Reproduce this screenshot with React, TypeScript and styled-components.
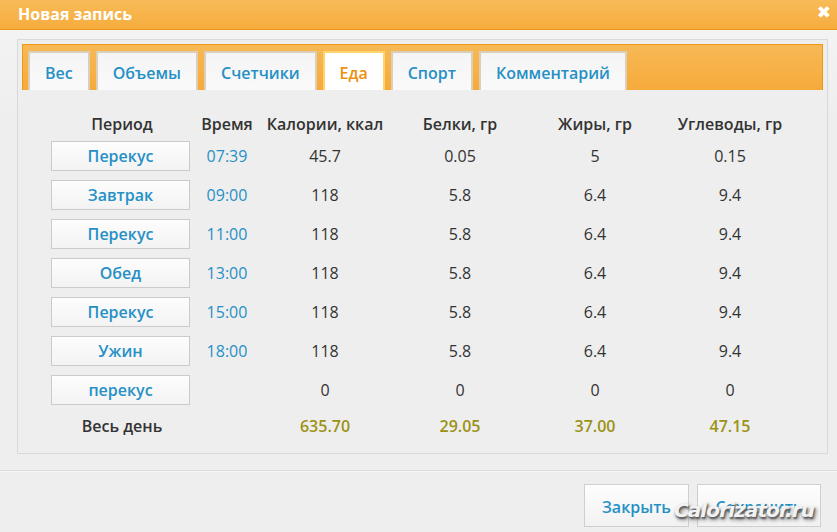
import styled, { createGlobalStyle } from 'styled-components'

const GlobalStyle = createGlobalStyle`
  html, body {
    margin: 0;
    padding: 0;
    background: #f0f0f0;
    font-family: 'Open Sans', 'DejaVu Sans', sans-serif;
  }
`

const Dialog = styled.div`
  position: relative;
  width: 837px;
  height: 532px;
  overflow: hidden;
  background: linear-gradient(#f5f5f5, #eeeeee 120px, #eeeeee);
`

const TitleBar = styled.div`
  height: 30px;
  box-sizing: border-box;
  display: flex;
  align-items: center;
  justify-content: space-between;
  padding: 0 6px 1px 18px;
  background: linear-gradient(#f8bb58, #f6ac3e);
  border-bottom: 1px solid #ef9511;
  color: #fff;
  font-weight: 700;
  font-size: 16px;
`

const Close = styled.span`
  font-size: 17px;
  line-height: 1;
  margin-top: -4px;
  font-family: 'DejaVu Sans', sans-serif;
`

const Panel = styled.div`
  margin: 9px 9px 0 17px;
  border: 1px solid #d9d9d9;
  padding: 4px 4px 15px;
  background: #eeeeee;
`

const TabBar = styled.div`
  display: flex;
  gap: 6px;
  height: 46px;
  box-sizing: border-box;
  padding: 6px 0 0 5px;
  border: 1px solid #ef9913;
  border-bottom: none;
  background: linear-gradient(#f7b956, #f6aa3a);
`

const Tab = styled.div<{ $active?: boolean }>`
  display: flex;
  align-items: center;
  padding: 2px 15px 0;
  box-sizing: border-box;
  height: 39px;
  border: 2px solid ${p => (p.$active ? '#fcd46a' : '#dccfb9')};
  border-bottom: none;
  background: ${p => (p.$active ? '#ffffff' : 'linear-gradient(#f4f4f4, #fafafa)')};
  color: ${p => (p.$active ? '#f0900c' : '#2690c6')};
  font-size: 16px;
  font-weight: 600;
`

const Grid = styled.div`
  display: grid;
  grid-template-columns: 142px 68px 128px 142px 128px 142px;
  grid-template-rows: 27px repeat(7, 30px) 24px;
  row-gap: 9px;
  margin: 15px 0 0 29px;
`

const Head = styled.div`
  display: flex;
  align-items: flex-end;
  justify-content: center;
  color: #333;
  font-size: 16px;
  font-weight: 600;
  line-height: 20px;
  margin-bottom: -2px;
  white-space: nowrap;
`

const Cell = styled.div<{ $tone?: 'time' | 'total' | 'label' }>`
  display: flex;
  align-items: center;
  justify-content: center;
  font-size: 16px;
  white-space: nowrap;
  color: ${p => (p.$tone === 'time' ? '#2690c6' : p.$tone === 'total' ? '#9b9214' : '#333')};
  font-weight: ${p => (p.$tone === 'total' || p.$tone === 'label' ? 600 : 400)};
`

const PeriodButton = styled.div`
  width: 139px;
  box-sizing: border-box;
  display: flex;
  align-items: center;
  justify-content: center;
  border: 1px solid #cbcbcb;
  background: linear-gradient(#fdfdfd, #f3f3f3);
  color: #2690c6;
  font-size: 16px;
  font-weight: 600;
`

const Separator = styled.div`
  margin-top: 16px;
  border-top: 1px solid #dadada;
  border-bottom: 1px solid #f8f8f8;
`

const Footer = styled.div`
  display: flex;
  justify-content: flex-end;
  gap: 8px;
  padding: 12px 16px 0 0;
`

const FooterButton = styled.div<{ $w: number }>`
  width: ${p => p.$w}px;
  height: 43px;
  box-sizing: border-box;
  display: flex;
  align-items: center;
  justify-content: center;
  padding-top: 2px;
  border: 1px solid #cfcfcf;
  background: linear-gradient(#fdfdfd, #f2f2f2);
  color: #2690c6;
  font-size: 16px;
  font-weight: 600;
`

const Watermark = styled.div`
  position: absolute;
  left: 674px;
  top: 498px;
  font-family: 'DejaVu Sans', sans-serif;
  font-size: 20px;
  font-weight: 700;
  font-style: italic;
  color: #f2f2f2;
  letter-spacing: -0.9px;
  text-shadow: 1px 2px 2px #555, 2px 3px 4px #888;
  pointer-events: none;
`

const tabs = ['Вес', 'Объемы', 'Счетчики', 'Еда', 'Спорт', 'Комментарий']

const rows = [
  ['Перекус', '07:39', '45.7', '0.05', '5', '0.15'],
  ['Завтрак', '09:00', '118', '5.8', '6.4', '9.4'],
  ['Перекус', '11:00', '118', '5.8', '6.4', '9.4'],
  ['Обед', '13:00', '118', '5.8', '6.4', '9.4'],
  ['Перекус', '15:00', '118', '5.8', '6.4', '9.4'],
  ['Ужин', '18:00', '118', '5.8', '6.4', '9.4'],
  ['перекус', '', '0', '0', '0', '0'],
]

const headers = ['Период', 'Время', 'Калории, ккал', 'Белки, гр', 'Жиры, гр', 'Углеводы, гр']
const totals = ['635.70', '29.05', '37.00', '47.15']

export default function App() {
  return (
    <>
      <GlobalStyle />
      <Dialog>
        <TitleBar>
          Новая запись
          <Close>✖</Close>
        </TitleBar>
        <Panel>
          <TabBar>
            {tabs.map(t => (
              <Tab key={t} $active={t === 'Еда'}>
                {t}
              </Tab>
            ))}
          </TabBar>
          <Grid>
            {headers.map(h => (
              <Head key={h}>{h}</Head>
            ))}
            {rows.flatMap((r, i) => [
              <PeriodButton key={'p' + i}>{r[0]}</PeriodButton>,
              <Cell key={'t' + i} $tone="time">
                {r[1]}
              </Cell>,
              ...r.slice(2).map((v, j) => <Cell key={i + '-' + j}>{v}</Cell>),
            ])}
            <Cell $tone="label">Весь день</Cell>
            <Cell />
            {totals.map(v => (
              <Cell key={v} $tone="total">
                {v}
              </Cell>
            ))}
          </Grid>
        </Panel>
        <Separator />
        <Footer>
          <FooterButton $w={105}>Закрыть</FooterButton>
          <FooterButton $w={124}>Сохранить</FooterButton>
        </Footer>
        <Watermark>Calorizator.ru</Watermark>
      </Dialog>
    </>
  )
}
